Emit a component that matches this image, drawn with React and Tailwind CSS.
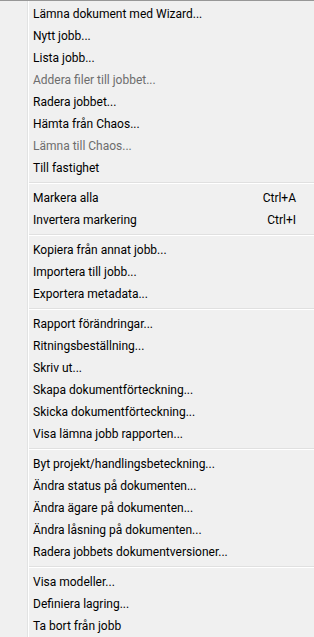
const groups = [
  [
    { label: 'Lämna dokument med Wizard...' },
    { label: 'Nytt jobb...' },
    { label: 'Lista jobb...' },
    { label: 'Addera filer till jobbet...', disabled: true },
    { label: 'Radera jobbet...' },
    { label: 'Hämta från Chaos...' },
    { label: 'Lämna till Chaos...', disabled: true },
    { label: 'Till fastighet' },
  ],
  [
    { label: 'Markera alla', shortcut: 'Ctrl+A' },
    { label: 'Invertera markering', shortcut: 'Ctrl+I' },
  ],
  [
    { label: 'Kopiera från annat jobb...' },
    { label: 'Importera till jobb...' },
    { label: 'Exportera metadata...' },
  ],
  [
    { label: 'Rapport förändringar...' },
    { label: 'Ritningsbeställning...' },
    { label: 'Skriv ut...' },
    { label: 'Skapa dokumentförteckning...' },
    { label: 'Skicka dokumentförteckning...' },
    { label: 'Visa lämna jobb rapporten...' },
  ],
  [
    { label: 'Byt projekt/handlingsbeteckning...' },
    { label: 'Ändra status på dokumenten...' },
    { label: 'Ändra ägare på dokumenten...' },
    { label: 'Ändra låsning på dokumenten...' },
    { label: 'Radera jobbets dokumentversioner...' },
  ],
  [
    { label: 'Visa modeller...' },
    { label: 'Definiera lagring...' },
    { label: 'Ta bort från jobb' },
  ],
];

function MenuItem({ item }) {
  return (
    <div
      className={
        'h-[22px] flex items-center pl-[4px] pr-[18px] ' +
        (item.disabled ? 'text-[#6d6d6d]' : 'text-black')
      }
    >
      <span>{item.label}</span>
      {item.shortcut && <span className="ml-auto">{item.shortcut}</span>}
    </div>
  );
}

function Separator() {
  return (
    <div className="h-[8px] flex flex-col justify-center">
      <div className="h-px bg-[#e0e0e0]" />
      <div className="h-px bg-white" />
    </div>
  );
}

export default function App() {
  return (
    <div
      className="w-[314px] h-[637px] bg-[#f0f0f0] border-t border-[#979797] flex text-[12px] overflow-hidden"
      style={{ fontFamily: 'Roboto, "Noto Sans", sans-serif' }}
    >
      <div className="w-[28px] border-r border-[#e2e3e3]" />
      <div className="w-px bg-white" />
      <div className="flex-1 pt-[2px]">
        {groups.map((group, gi) => (
          <div key={gi}>
            {gi > 0 && <Separator />}
            {group.map((item) => (
              <MenuItem key={item.label} item={item} />
            ))}
          </div>
        ))}
      </div>
    </div>
  );
}
